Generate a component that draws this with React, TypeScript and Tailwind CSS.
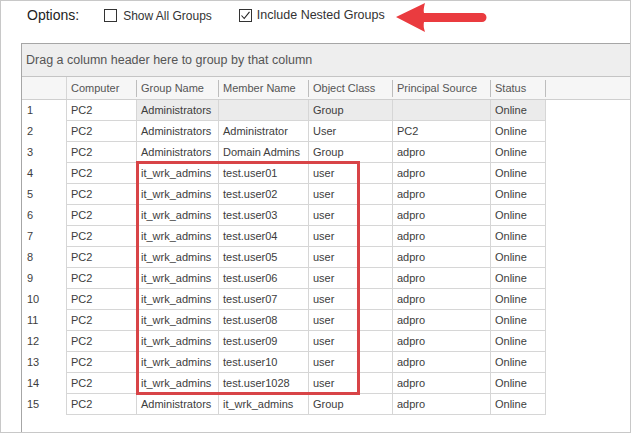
const cols = [
  { key: "computer", label: "Computer", w: "w-[70px]" },
  { key: "group", label: "Group Name", w: "w-[82px]" },
  { key: "member", label: "Member Name", w: "w-[90px]" },
  { key: "cls", label: "Object Class", w: "w-[84px]" },
  { key: "src", label: "Principal Source", w: "w-[98px]" },
  { key: "status", label: "Status", w: "w-[55px]" },
];

const rows: string[][] = [
  ["PC2", "Administrators", "", "Group", "", "Online"],
  ["PC2", "Administrators", "Administrator", "User", "PC2", "Online"],
  ["PC2", "Administrators", "Domain Admins", "Group", "adpro", "Online"],
  ["PC2", "it_wrk_admins", "test.user01", "user", "adpro", "Online"],
  ["PC2", "it_wrk_admins", "test.user02", "user", "adpro", "Online"],
  ["PC2", "it_wrk_admins", "test.user03", "user", "adpro", "Online"],
  ["PC2", "it_wrk_admins", "test.user04", "user", "adpro", "Online"],
  ["PC2", "it_wrk_admins", "test.user05", "user", "adpro", "Online"],
  ["PC2", "it_wrk_admins", "test.user06", "user", "adpro", "Online"],
  ["PC2", "it_wrk_admins", "test.user07", "user", "adpro", "Online"],
  ["PC2", "it_wrk_admins", "test.user08", "user", "adpro", "Online"],
  ["PC2", "it_wrk_admins", "test.user09", "user", "adpro", "Online"],
  ["PC2", "it_wrk_admins", "test.user10", "user", "adpro", "Online"],
  ["PC2", "it_wrk_admins", "test.user1028", "user", "adpro", "Online"],
  ["PC2", "Administrators", "it_wrk_admins", "Group", "adpro", "Online"],
];

function CheckBox({ checked }: { checked?: boolean }) {
  return (
    <span className="flex h-[13px] w-[13px] items-center justify-center border border-[#333] bg-white">
      {checked && (
        <svg width="11" height="11" viewBox="0 0 11 11">
          <path d="M1.5 5.5 L4.2 8.5 L9.5 1.8" fill="none" stroke="#222" strokeWidth="1.1" />
        </svg>
      )}
    </span>
  );
}

export default function App() {
  return (
    <div
      className="relative flex h-[433px] w-[631px] flex-col overflow-hidden border border-[#c8c8c8] bg-white"
      style={{ fontFamily: '"Liberation Sans", Arial, sans-serif' }}
    >
      {/* options bar */}
      <div className="flex h-[29px] shrink-0 items-center pl-[26px]">
        <span className="text-[14px] text-[#222]">Options:</span>
        <div className="ml-[25px] flex items-center gap-[6px]">
          <CheckBox />
          <span className="text-[12px] text-[#333]">Show All Groups</span>
        </div>
        <div className="ml-[27px] flex items-center gap-[5px]">
          <CheckBox checked />
          <span className="text-[12.5px] text-[#333]">Include Nested Groups</span>
        </div>
      </div>

      {/* red arrow */}
      <svg className="absolute left-[393px] top-[1px]" width="94" height="31" viewBox="0 0 94 31">
        <path
          d="M2 15 L31 1 Q29 8 30 11 L88 11 A4.5 4.5 0 0 1 88 20 L30 20 Q29 24 31 30 Z"
          fill="#ea3b3f"
        />
      </svg>

      {/* grid panel */}
      <div className="ml-[20px] mt-[13px] flex flex-1 flex-col border-l border-t border-[#a6a6a6]">
        <div className="flex h-[33px] shrink-0 items-center border-b border-[#c4c4c4] bg-[#eeeeee] pl-[4px] text-[12.5px] text-[#555]">
          Drag a column header here to group by that column
        </div>

        {/* header */}
        <div className="flex h-[23px] shrink-0 border-b border-[#cfcfcf] bg-[#f6f6f6] text-[11px] text-[#555]">
          <div className="w-[45px] border-r border-[#d6d6d6]" />
          {cols.map((c) => (
            <div key={c.key} className={`${c.w} flex items-center`}>
              <span className="flex-1 truncate pl-[4px]">{c.label}</span>
              <span className="h-[17px] w-px bg-[#bdbdbd]" />
            </div>
          ))}
        </div>

        {/* rows */}
        <div className="text-[11px] text-[#3d3d3d]">
          {rows.map((r, i) => (
            <div key={i} className="flex h-[21px]">
              <div className="flex w-[44px] items-center pl-[5px]">{i + 1}</div>
              <div className="w-px bg-[#d6d6d6]" />
              {r.map((v, j) => (
                <div
                  key={j}
                  className={`${cols[j].w} flex items-center border-b border-r border-[#d6d6d6] pl-[4px] ${
                    i === 0 && j > 0 ? "bg-[#ebebeb]" : ""
                  }`}
                >
                  {v}
                </div>
              ))}
            </div>
          ))}
        </div>
      </div>

      {/* highlight box */}
      <div className="absolute left-[135px] top-[160px] h-[234px] w-[224px] border-[3px] border-[#d84447]" />
    </div>
  );
}
